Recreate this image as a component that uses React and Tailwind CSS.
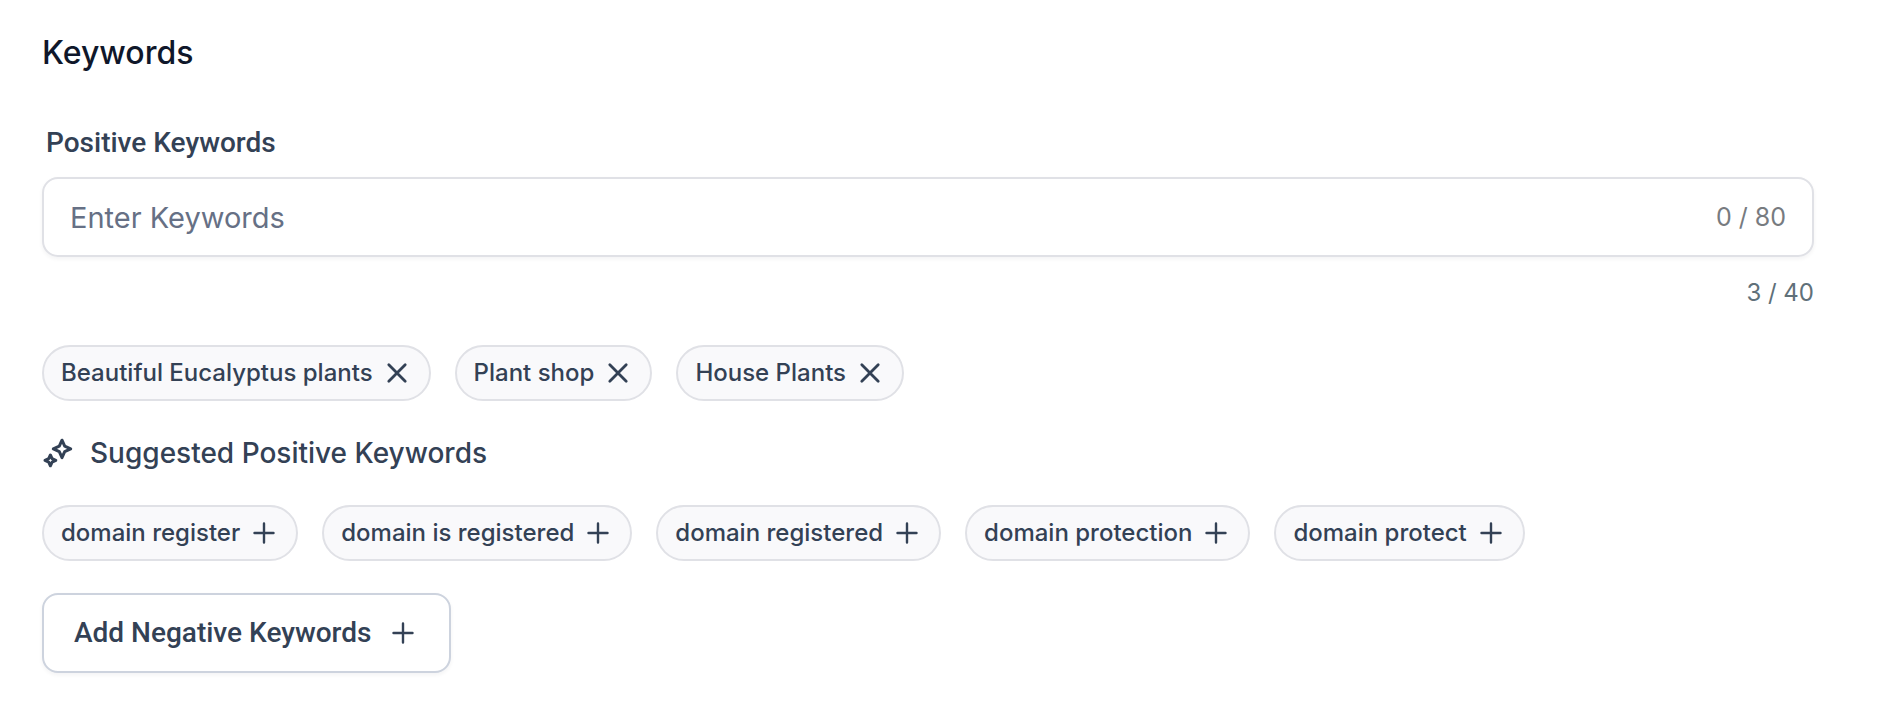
import React, { useState } from 'react';

const selectedKeywords = ['Beautiful Eucalyptus plants', 'Plant shop', 'House Plants'];

const suggestedKeywords = [
  'domain register',
  'domain is registered',
  'domain registered',
  'domain protection',
  'domain protect',
];

const CrossIcon = () => (
  <svg width="24" height="24" viewBox="0 0 24 24" fill="none" stroke="currentColor" strokeWidth="2.8" strokeLinecap="round" aria-hidden="true">
    <path d="M3.8 3.8 20.2 20.2M20.2 3.8 3.8 20.2" />
  </svg>
);

const PlusIcon = () => (
  <svg width="24" height="24" viewBox="0 0 24 24" fill="none" stroke="currentColor" strokeWidth="2.4" strokeLinecap="round" aria-hidden="true">
    <path d="M12 2.5v19M2.5 12h19" />
  </svg>
);

const SparkleIcon = () => (
  <svg width="32" height="32" viewBox="0 0 32 32" fill="none" stroke="currentColor" strokeWidth="3" strokeLinejoin="round" aria-hidden="true">
    <path d="M20 3.2 22.7 9.2 28.7 11.9 22.7 14.6 20 20.6 17.3 14.6 11.3 11.9 17.3 9.2Z" />
    <path d="M8.4 18 10.1 21.7 13.8 23.4 10.1 25.1 8.4 28.8 6.7 25.1 3 23.4 6.7 21.7Z" />
  </svg>
);

const Chip = ({ label, action, children }) => (
  <li className="flex h-14 items-center gap-3 rounded-full border-2 border-[#e0e1e6] bg-[#f9f9fb] pr-5 pl-[17px]">
    <span className="whitespace-nowrap">{label}</span>
    <button type="button" aria-label={`${action} ${label}`} className="cursor-pointer">
      {children}
    </button>
  </li>
);

const App = () => {
  const [keyword, setKeyword] = useState('');

  return (
    <main className="min-h-screen bg-white pt-[33px] pr-20 pb-8 pl-[42px] font-['Inter',sans-serif] text-[#334155]">
      <h1 className="text-[32px] leading-10 font-medium text-[#0f172a]">Keywords</h1>

      {/* Keyword input */}
      <label htmlFor="positive-keywords" className="mt-[50px] block pl-1 font-['Roboto',sans-serif] text-[28px] leading-10 font-medium">
        Positive Keywords
      </label>
      <div className="mt-3.5 flex h-20 items-center rounded-2xl border-2 border-[#e0e1e6] bg-white px-[26px] pt-0.5 shadow-[0_2px_4px_rgba(16,24,40,0.05)]">
        <input
          id="positive-keywords"
          type="text"
          value={keyword}
          maxLength={80}
          onChange={(e) => setKeyword(e.target.value)}
          placeholder="Enter Keywords"
          className="min-w-0 flex-1 text-[29px] outline-none placeholder:text-[#667085]"
        />
        <span className="text-[25px] text-[#777b80]">{keyword.length} / 80</span>
      </div>
      <p className="mt-5 text-right text-2xl text-[#607079]">3 / 40</p>

      {/* Selected keywords */}
      <ul className="mt-9 flex flex-wrap gap-6 text-2xl font-medium">
        {selectedKeywords.map((label) => (
          <Chip key={label} label={label} action="Remove">
            <CrossIcon />
          </Chip>
        ))}
      </ul>

      {/* Suggestions */}
      <h2 className="mt-8 flex items-center gap-4 text-[28px] leading-10 font-medium">
        <SparkleIcon />
        Suggested Positive Keywords
      </h2>
      <ul className="mt-8 flex flex-wrap gap-6 text-2xl font-medium">
        {suggestedKeywords.map((label) => (
          <Chip key={label} label={label} action="Add">
            <PlusIcon />
          </Chip>
        ))}
      </ul>

      <button
        type="button"
        className="mt-8 flex h-20 cursor-pointer items-center gap-5 rounded-2xl border-2 border-[#cdd3de] bg-white pr-[34px] pl-[30px] font-['Roboto',sans-serif] text-[28px] font-medium shadow-[0_2px_4px_rgba(16,24,40,0.05)]"
      >
        Add Negative Keywords
        <PlusIcon />
      </button>
    </main>
  );
};

export default App;
